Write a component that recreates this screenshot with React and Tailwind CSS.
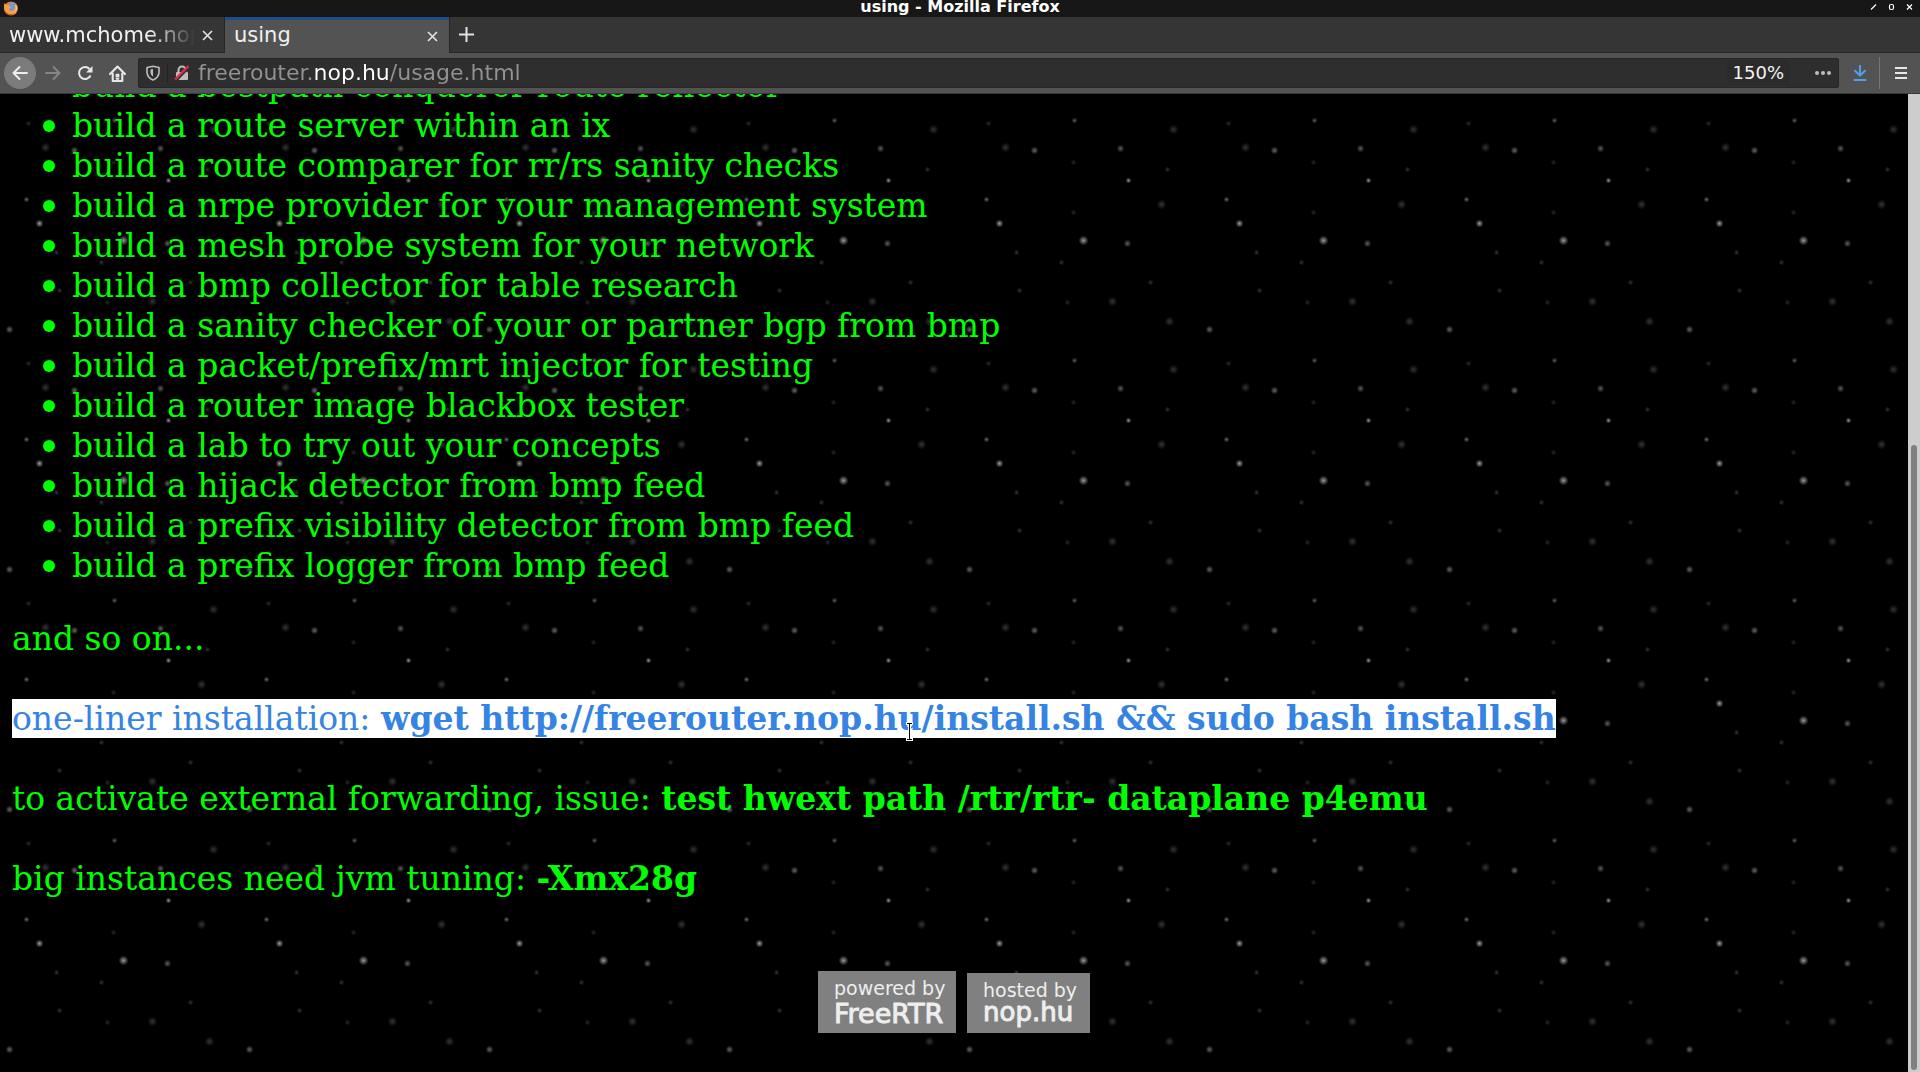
import React from "react";

const items = [
  "build a bestpath conquerer route reflector",
  "build a route server within an ix",
  "build a route comparer for rr/rs sanity checks",
  "build a nrpe provider for your management system",
  "build a mesh probe system for your network",
  "build a bmp collector for table research",
  "build a sanity checker of your or partner bgp from bmp",
  "build a packet/prefix/mrt injector for testing",
  "build a router image blackbox tester",
  "build a lab to try out your concepts",
  "build a hijack detector from bmp feed",
  "build a prefix visibility detector from bmp feed",
  "build a prefix logger from bmp feed",
];

// x, y, radius, brightness inside one 240x240 tile
const stars = [
  [33, 29, 5, 0.2],
  [88, 23, 3, 0.16],
  [174, 20, 3, 0.36],
  [105, 47, 5, 0.2],
  [134, 50, 4, 0.4],
  [220, 48, 4, 0.36],
  [173, 62, 3, 0.16],
  [27, 69, 3, 0.2],
  [228, 80, 3, 0.55],
  [86, 99, 3, 0.4],
  [21, 104, 5, 0.2],
  [173, 112, 3, 0.16],
  [99, 123, 4, 0.6],
  [183, 140, 5, 0.58],
  [227, 143, 4, 0.36],
  [116, 152, 3, 0.2],
  [161, 162, 3, 0.2],
  [10, 182, 3, 0.2],
  [119, 190, 3, 0.2],
  [167, 202, 3, 0.16],
  [212, 201, 5, 0.2],
  [29, 221, 5, 0.2],
  [69, 229, 4, 0.4],
];

function StarField() {
  return (
    <svg className="absolute inset-0 h-full w-full" aria-hidden="true">
      <defs>
        <radialGradient id="glow">
          <stop offset="0" stopColor="#fff" />
          <stop offset="0.4" stopColor="#fff" stopOpacity="0.6" />
          <stop offset="1" stopColor="#fff" stopOpacity="0" />
        </radialGradient>
        <pattern id="stars" x="180" y="6" width="240" height="240" patternUnits="userSpaceOnUse">
          {stars.map(([x, y, r, o]) => (
            <circle key={`${x}-${y}`} cx={x + 0.5} cy={y + 0.5} r={r} fill="url(#glow)" opacity={o} />
          ))}
        </pattern>
      </defs>
      <rect width="100%" height="100%" fill="url(#stars)" />
    </svg>
  );
}

function FirefoxLogo() {
  return (
    <svg className="ml-[3px] h-4 w-4" viewBox="0 0 16 16" aria-hidden="true">
      <circle cx="8" cy="7.5" r="7" fill="#e07a22" />
      <circle cx="9" cy="6" r="4.8" fill="#8094c8" />
      <path d="M1.5 2 3.5 4 6 3.6C5.6 5 7.4 5.6 8 6.2c-.4 1.4-2 1.2-2.2 2.3.6 1.7 3 2 4.9.6 1.4-1 1.6-2.600 1.400-4C14 6 14.400 8.500 13 11c-2 3.400-7 3.900-10 .8C.8 9.300.6 5 1.500 2z" fill="#f0a040" />
      <path d="M13 3.500c1.600 2.600 1.200 6.200-1.100 8.300 1-2.300 1.300-4.800.3-7z" fill="#f9dc7a" />
      <path d="M2 9c1 3.500 5 5.500 9 3.500C8 15.500 2.500 14 2 9z" fill="#c4441c" />
    </svg>
  );
}

function CloseButton({ label }) {
  return (
    <button type="button" aria-label={label} className="flex h-6 w-6 shrink-0 items-center justify-center">
      <svg className="h-[11px] w-[11px]" viewBox="0 0 11 11" fill="none" stroke="#e4e4e4" strokeWidth="1.6">
        <path d="M1 1l9 9M10 1l-9 9" />
      </svg>
    </button>
  );
}

function TitleBar() {
  return (
    <header className="flex h-[17px] items-center bg-[#171717]">
      <div className="flex-1">
        <FirefoxLogo />
      </div>
      <h1 className="-mt-1 text-base leading-4 font-bold text-white">using - Mozilla Firefox</h1>
      <div className="flex flex-1 justify-end">
        <button type="button" aria-label="Minimize" className="flex w-[18px] justify-center">
          <svg className="mb-1 h-[10px] w-[7px]" viewBox="0 0 7 10" stroke="#fff" strokeWidth="1.2" fill="none">
            <path d="M1 7.5l5-5" />
          </svg>
        </button>
        <button type="button" aria-label="Maximize" className="flex w-[18px] justify-center">
          <svg className="mb-1 h-[10px] w-[7px]" viewBox="0 0 7 10" stroke="#fff" strokeWidth="1.2" fill="none">
            <rect x="1.5" y="2.5" width="4" height="5" rx="1.5" />
          </svg>
        </button>
        <button type="button" aria-label="Close window" className="mr-0.5 flex w-[18px] justify-center">
          <svg className="mb-1 h-[10px] w-[7px]" viewBox="0 0 7 10" stroke="#fff" strokeWidth="1.2" fill="none">
            <path d="M1 2.5l5 5M6 2.5l-5 5" />
          </svg>
        </button>
      </div>
    </header>
  );
}

function TabStrip() {
  return (
    <div className="flex h-9 border-b border-[#262626] bg-[#353535] text-[21px] text-[#f0f0f0]">
      <div className="flex w-[225px] items-center border-r border-[#262626] pt-0.5 pr-[5px] pl-[9px]">
        <span className="flex-1 overflow-hidden whitespace-nowrap [mask-image:linear-gradient(90deg,#000_140px,transparent)]">
          www.mchome.nop.hu
        </span>
        <CloseButton label="Close www.mchome.nop.hu" />
      </div>
      <div className="-mb-px flex w-[224px] items-center border-t-3 border-[#1d4d8c] bg-[#535353] pr-[5px] pb-px pl-[9px]">
        <span className="flex-1">using</span>
        <CloseButton label="Close using" />
      </div>
      <button type="button" aria-label="New tab" className="flex w-[34px] items-center justify-center border-l border-[#262626]">
        <svg className="h-[15px] w-[15px]" viewBox="0 0 15 15" fill="none" stroke="#e4e4e4" strokeWidth="2">
          <path d="M7.5 0v15M0 7.5h15" />
        </svg>
      </button>
    </div>
  );
}

function NavBar() {
  return (
    <nav className="flex h-[41px] items-center border-b border-[#3a3a3a] bg-[#535353] pl-1">
      <button type="button" aria-label="Back" className="flex h-8 w-8 items-center justify-center rounded-full bg-[#7b7b7b]">
        <svg className="h-4 w-4" viewBox="0 0 16 16" fill="none" stroke="#eee" strokeWidth="2" strokeLinecap="round" strokeLinejoin="round">
          <path d="M15 8H1.5M7.5 2 1.5 8l6 6" />
        </svg>
      </button>
      <button type="button" aria-label="Forward" className="flex h-8 w-[33px] items-center justify-center">
        <svg className="h-4 w-4" viewBox="0 0 16 16" fill="none" stroke="#858585" strokeWidth="2" strokeLinecap="round" strokeLinejoin="round">
          <path d="M1 8h13.5M8.5 2l6 6-6 6" />
        </svg>
      </button>
      <button type="button" aria-label="Reload" className="flex h-8 w-8 items-center justify-center">
        <svg className="h-4 w-4" viewBox="0 0 16 16" fill="none" stroke="#e8e8e8" strokeWidth="2">
          <path d="M13.5 10.5A6 6 0 1 1 12.5 4" />
          <path d="M15.5 1v6.5H9z" fill="#e8e8e8" stroke="none" />
        </svg>
      </button>
      <button type="button" aria-label="Home" className="flex h-8 w-8 items-center justify-center">
        <svg className="h-[17px] w-[17px]" viewBox="0 0 16 16" fill="none" stroke="#e8e8e8" strokeWidth="2" strokeLinejoin="round" strokeLinecap="round">
          <path d="M1 8.5 8 1.5l7 7" />
          <path d="M3.5 8v7h9V8" />
          <path d="M7 9h2v2H7zM7 13h2" strokeWidth="1.6" />
        </svg>
      </button>
      <div className="ml-[5px] flex h-[30px] flex-1 items-center rounded-xs border border-[#262626] bg-[#2e2e2e]">
        <button type="button" aria-label="Tracking protection" className="flex h-full w-7 items-center justify-center">
          <svg className="h-4 w-4" viewBox="0 0 16 16" fill="none" stroke="#bdbdbd" strokeWidth="1.6" strokeLinejoin="round">
            <path d="M8 1.2 14 2.5V7c0 4-2.5 6.5-6 8-3.5-1.500-6-4-6-8V2.5z" />
            <path d="M8 4v7.5C6.5 10.5 5.5 9 5.5 7V4.5z" fill="#bdbdbd" stroke="none" />
          </svg>
        </button>
        <span className="h-5 w-px bg-[#222222]" />
        <button type="button" aria-label="Connection not secure" className="flex h-full w-7 items-center justify-center">
          <svg className="h-4 w-4" viewBox="0 0 16 16" fill="none">
            <rect x="2" y="7" width="12" height="8" rx="1" fill="#bdbdbd" />
            <path d="M4.5 7V5a3.5 3.5 0 0 1 7 0v2" stroke="#bdbdbd" strokeWidth="2" />
            <path d="M2 16 15.5 2" stroke="#2e2e2e" strokeWidth="2" />
            <path d="M1 14.5 14.500 1" stroke="#e22850" strokeWidth="2.4" />
          </svg>
        </button>
        <input
          type="text"
          aria-label="Address"
          defaultValue="freerouter.nop.hu/usage.html"
          className="ml-0.5 min-w-0 flex-1 bg-[linear-gradient(90deg,#929292_116px,#ffffff_116px,#ffffff_190px,#929292_190px)] bg-clip-text text-[22px] leading-7 text-transparent outline-none"
        />
        <button type="button" className="rounded-xs bg-[#2b2b2b] px-1.5 text-lg leading-6 text-[#f4f4f4]">
          150%
        </button>
        <button type="button" aria-label="Page actions" className="ml-[18px] flex h-full w-[30px] items-center justify-center">
          <svg className="h-4 w-4" viewBox="0 0 16 16" fill="#bdbdbd">
            <circle cx="2" cy="8" r="2" />
            <circle cx="8" cy="8" r="2" />
            <circle cx="14" cy="8" r="2" />
          </svg>
        </button>
      </div>
      <button type="button" aria-label="Downloads" className="flex h-8 w-10 items-center justify-center pl-0.5">
        <svg className="h-4 w-4" viewBox="0 0 16 16" fill="none" stroke="#4f9fee" strokeWidth="2" strokeLinecap="round" strokeLinejoin="round">
          <path d="M8 0.5V10M3 5.8 8 10.5l5-4.7M2.5 15h11" />
        </svg>
      </button>
      <span className="h-8 w-px bg-[#777777]" />
      <button type="button" aria-label="Open menu" className="flex h-8 w-10 items-center justify-center pl-0.5">
        <svg className="h-3 w-3" viewBox="0 0 12 12" fill="none" stroke="#e8e8e8" strokeWidth="2">
          <path d="M0 1h12M0 6h12M0 11h12" />
        </svg>
      </button>
    </nav>
  );
}

function TextCursor() {
  return (
    <svg className="absolute top-[23px] left-[893px] h-5 w-[9px]" viewBox="0 0 9 20" fill="none" aria-hidden="true">
      <path d="M1 1.5h7M1 17.5h7M4.5 1.5v16" stroke="#fff" strokeWidth="3" />
      <path d="M2 1.5h5M2 17.5h5M4.5 1.5v16" stroke="#000" strokeWidth="1" />
    </svg>
  );
}

function Page() {
  return (
    <main className="relative flex flex-1 overflow-hidden bg-black font-['DejaVu_Serif',serif] text-[33px] leading-10 text-[#00ff00]">
      <div className="relative min-w-0 flex-1">
        <StarField />
        <div className="relative px-3">
          <ul className="-mt-7 pl-[60px]">
            {items.map((item) => (
              <li key={item} className="relative">
                <span className="absolute top-3.5 -left-[29px] h-3 w-3 rounded-full bg-[#00ff00]" />
                {item}
              </li>
            ))}
          </ul>
          <p className="mt-[33px]">and so on...</p>
          <p className="relative mt-10">
            <span className="bg-white text-[#3584e4]">
              one-liner installation: <b>wget http://freerouter.nop.hu/install.sh && sudo bash install.sh</b>
            </span>
            <TextCursor />
          </p>
          <p className="mt-10">
            to activate external forwarding, issue: <b>test hwext path /rtr/rtr- dataplane p4emu</b>
          </p>
          <p className="mt-10">
            big instances need jvm tuning: <b>-Xmx28g</b>
          </p>
          <div className="mt-[72px] flex items-end justify-center gap-[11px] font-['DejaVu_Sans',sans-serif] text-[#eeeeee]">
            <a href="#freertr" className="h-[62px] w-[138px] bg-[#808080] pt-[5px] pl-4">
              <span className="block text-[19px] leading-6">powered by</span>
              <span className="block text-[27px] leading-7 [-webkit-text-stroke:1px]">FreeRTR</span>
            </a>
            <a href="#nop" className="h-[60px] w-[123px] bg-[#808080] pt-[5px] pl-4">
              <span className="block text-[19px] leading-6">hosted by</span>
              <span className="block text-[26px] leading-5 [-webkit-text-stroke:1px]">nop.hu</span>
            </a>
          </div>
        </div>
      </div>
      <div className="flex w-3 flex-col items-center bg-[#cdcdcd]">
        <div className="flex-[351]" />
        <div className="w-1.5 flex-[625] rounded-full bg-[#808080]" />
        <div className="h-0.5" />
      </div>
    </main>
  );
}

export default function App() {
  return (
    <div className="flex h-screen flex-col overflow-hidden bg-black font-['DejaVu_Sans',sans-serif]">
      <TitleBar />
      <TabStrip />
      <NavBar />
      <Page />
    </div>
  );
}
